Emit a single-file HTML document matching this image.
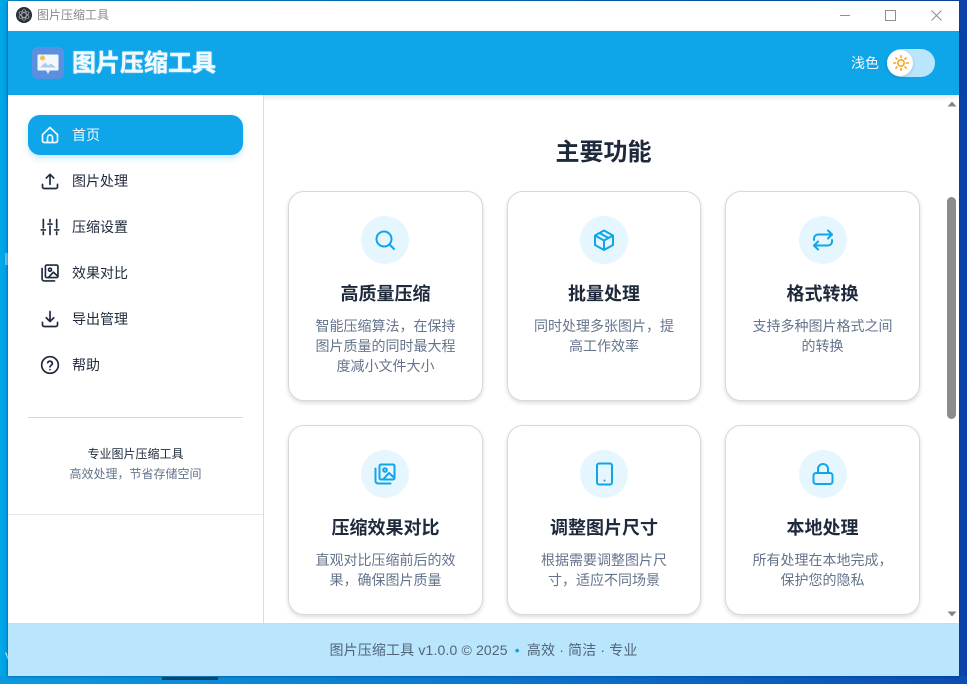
<!DOCTYPE html>
<html lang="zh">
<head>
<meta charset="utf-8">
<title>图片压缩工具</title>
<style>
*{box-sizing:border-box;margin:0;padding:0}
html,body{width:967px;height:684px;overflow:hidden}
body{position:relative;font-family:"Liberation Sans","Noto Sans CJK SC",sans-serif;background:linear-gradient(90deg,#00a8e8 0,#00a0e6 8px,#0a4ab0 959px,#0a3fa6 967px)}
.abs{position:absolute}
#bot{left:0;top:676px;width:967px;height:8px;background:linear-gradient(90deg,#0a9ae0,#0a78d0 50%,#0a4eb4)}
#win{left:8px;top:1px;width:951px;height:675px;background:#fff;box-shadow:0 0 3px rgba(0,30,80,.6)}
#tb{left:8px;top:1px;width:951px;height:30px;background:#fff}
#tbt{left:37px;top:8px;font-size:12px;line-height:15px;color:#8a8a8a}
#hd{left:8px;top:31px;width:951px;height:64px;background:#0ea5e9;box-shadow:0 2px 5px rgba(0,0,0,.12)}
#ttl{left:72px;top:47px;font-size:24px;line-height:33px;font-weight:700;color:#f0f9ff;white-space:nowrap;-webkit-text-stroke:.4px #f0f9ff;text-shadow:0 0 2px rgba(255,255,255,.35)}
#light{left:851px;top:54px;font-size:14px;line-height:18px;color:#f0f9ff}
#tog{left:887px;top:49px;width:48px;height:28px;border-radius:14px;background:#bae6fd}
#knob{left:887px;top:50px;width:26px;height:26px;border-radius:50%;background:#fff;box-shadow:0 1px 3px rgba(0,0,0,.18)}
#side{left:8px;top:95px;width:256px;height:528px;background:#fff;border-right:1px solid #d8dde3}
.nav{position:absolute;left:28px;width:215px;height:40px;border-radius:12px}
.nav svg{position:absolute;left:12px;top:10px}
.nav span{position:absolute;left:44px;top:10px;font-size:14px;line-height:20px;color:#1e293b}
.nav.on{background:#0ea5e9;box-shadow:0 3px 7px rgba(14,165,233,.25)}
.nav.on span{color:#f0f9ff}
#hr1{left:28px;top:417px;width:215px;height:1px;background:#d5dade}
#hr2{left:8px;top:514px;width:255px;height:1px;background:#e5e8ec}
#s1{left:8px;width:255px;top:446px;text-align:center;font-size:12px;line-height:17px;color:#1e293b}
#s2{left:8px;width:255px;top:466px;text-align:center;font-size:12px;line-height:17px;color:#64748b}
#h2{left:263px;width:681px;top:136px;text-align:center;font-size:24px;line-height:33px;font-weight:700;color:#1e293b}
.card{position:absolute;background:#fff;border:1px solid #d5d9de;border-radius:16px;box-shadow:0 2px 4px rgba(0,0,0,.14);text-align:center}
.ic{position:absolute;top:24px;left:50%;margin-left:-24px;width:48px;height:48px;border-radius:50%;background:#e6f6fe}
.c1 .ic{left:72px;margin-left:0}
.ic svg{position:absolute;left:12px;top:12px}
.card h3{position:absolute;left:0;right:0;top:90px;font-size:18px;line-height:25px;font-weight:700;color:#1e293b}
.card p{position:absolute;left:24px;right:24px;top:124px;font-size:14px;line-height:20px;color:#64748b}
#ft{left:8px;top:623px;width:951px;height:53px;background:#bae6fd;border-top:1px solid #cfd8de;text-align:center;font-size:14px;line-height:52px;color:#526478;letter-spacing:.15px}
#ft b{color:#0ea5e9;font-weight:400;margin:0 3px}
#thumb{left:947px;top:197px;width:9px;height:222px;border-radius:5px;background:#8c8c8c}
svg{display:block}
</style>
</head>
<body>
<div class="abs" id="bot"></div>
<div class="abs" style="left:162px;top:677px;width:56px;height:3px;background:#10303c;opacity:.75"></div>
<div class="abs" style="left:5px;top:650px;font-size:12px;line-height:14px;color:#e8f4ff">V</div>
<div class="abs" style="left:5px;top:253px;width:3px;height:12px;background:#d0ecfa;opacity:.5"></div>
<div class="abs" id="win"></div>
<div class="abs" id="tb"></div>
<svg class="abs" style="left:16px;top:7px" width="16" height="16" viewBox="0 0 16 16"><circle cx="8" cy="8" r="8" fill="#2b2e36"/><g fill="none" stroke="#9fa6b2" stroke-width=".8"><ellipse cx="8" cy="8" rx="5.5" ry="2.3" transform="rotate(30 8 8)"/><ellipse cx="8" cy="8" rx="5.5" ry="2.3" transform="rotate(90 8 8)"/><ellipse cx="8" cy="8" rx="5.5" ry="2.3" transform="rotate(150 8 8)"/></g></svg>
<div class="abs" id="tbt">图片压缩工具</div>
<svg class="abs" style="left:835px;top:5px" width="112" height="20" viewBox="0 0 112 20" fill="none" stroke="#8f8f8f" stroke-width="1"><path d="M5 10.5H15"/><rect x="50.5" y="5.500" width="10" height="10"/><path d="M96.500 5.500L106.500 15.500M106.500 5.500L96.500 15.500"/></svg>

<div class="abs" id="hd"></div>
<svg class="abs" style="left:32px;top:47px" width="32" height="32" viewBox="0 0 32 32"><rect width="32" height="32" rx="6" fill="#5b8fe0"/><rect x="5.500" y="7.500" width="21" height="16" rx="1" fill="#f4f8fc"/><path d="M8 20.500l5-5 3 3 3-2 5 4z" fill="#a9cdea"/><circle cx="10.500" cy="11" r="2.500" fill="#f7c04a"/><rect x="14.500" y="23.500" width="3" height="1.500" fill="#e6eef6"/><rect x="15" y="25" width="2" height="1.500" fill="#c6d8ea"/></svg>
<div class="abs" id="ttl">图片压缩工具</div>
<div class="abs" id="light">浅色</div>
<div class="abs" id="tog"></div>
<div class="abs" id="knob"></div>
<svg class="abs" style="left:893px;top:55px" width="16" height="16" viewBox="0 0 16 16" fill="none" stroke="#f59e0b" stroke-width="1.500" stroke-linecap="round"><circle cx="8" cy="8" r="3.200"/><path d="M8 .8v1.700M8 13.500v1.700M.8 8h1.700M13.500 8h1.700M2.900 2.900l1.200 1.200M11.900 11.900l1.200 1.200M2.900 13.100l1.200-1.200M11.900 4.100l1.200-1.200"/></svg>

<div class="abs" id="side"></div>
<div class="nav on" style="top:115px"><svg width="20" height="20" viewBox="0 0 24 24" fill="none" stroke="#f0f9ff" stroke-width="2" stroke-linecap="round" stroke-linejoin="round"><path d="M3 11.500L12 3l9 8.500V19a2 2 0 0 1-2 2H5a2 2 0 0 1-2-2z"/><path d="M9 21v-6a3 3 0 0 1 6 0v6"/></svg><span>首页</span></div>
<div class="nav" style="top:161px"><svg width="20" height="20" viewBox="0 0 24 24" fill="none" stroke="#1e293b" stroke-width="2" stroke-linecap="round" stroke-linejoin="round"><path d="M3 16v3a2 2 0 0 0 2 2h14a2 2 0 0 0 2-2v-3"/><path d="M12 16V4M7.500 8.500L12 4l4.500 4.500"/></svg><span>图片处理</span></div>
<div class="nav" style="top:207px"><svg width="20" height="20" viewBox="0 0 24 24" fill="none" stroke="#1e293b" stroke-width="2" stroke-linecap="round"><path d="M4 3v10M4 18v3M12 3v3M12 11v10M20 3v10M20 18v3M1.500 15.500h5M9.500 8.500h5M17.500 15.500h5"/></svg><span>压缩设置</span></div>
<div class="nav" style="top:253px"><svg width="20" height="20" viewBox="0 0 24 24" fill="none" stroke="#1e293b" stroke-width="2" stroke-linecap="round" stroke-linejoin="round"><rect x="6.500" y="2.500" width="15" height="15" rx="1.500"/><path d="M2.500 6.500V19a2.500 2.500 0 0 0 2.500 2.500h12.500"/><circle cx="12" cy="8" r="1.800"/><path d="M10 17.500l6-6.500 5.500 5"/></svg><span>效果对比</span></div>
<div class="nav" style="top:299px"><svg width="20" height="20" viewBox="0 0 24 24" fill="none" stroke="#1e293b" stroke-width="2" stroke-linecap="round" stroke-linejoin="round"><path d="M3 16v3a2 2 0 0 0 2 2h14a2 2 0 0 0 2-2v-3"/><path d="M12 3v12M7.500 10.500L12 15l4.500-4.500"/></svg><span>导出管理</span></div>
<div class="nav" style="top:345px"><svg width="20" height="20" viewBox="0 0 24 24" fill="none" stroke="#1e293b" stroke-width="2" stroke-linecap="round" stroke-linejoin="round"><circle cx="12" cy="12" r="10"/><path d="M9.200 9.300a2.900 2.900 0 0 1 5.600 1c0 1.900-2.800 2.400-2.800 4"/><path d="M12 17.500v.1"/></svg><span>帮助</span></div>
<div class="abs" id="hr1"></div>
<div class="abs" id="s1">专业图片压缩工具</div>
<div class="abs" id="s2">高效处理，节省存储空间</div>
<div class="abs" id="hr2"></div>

<div class="abs" id="h2">主要功能</div>

<div class="card c1" style="left:288px;top:191px;width:195px;height:210px"><div class="ic"><svg width="24" height="24" viewBox="0 0 24 24" fill="none" stroke="#0ea5e9" stroke-width="2" stroke-linecap="round"><circle cx="11" cy="11" r="7.500"/><path d="M16.500 16.500L21 21"/></svg></div><h3>高质量压缩</h3><p>智能压缩算法，在保持图片质量的同时最大程度减小文件大小</p></div>
<div class="card" style="left:507px;top:191px;width:194px;height:210px"><div class="ic"><svg width="24" height="24" viewBox="0 0 24 24" fill="none" stroke="#0ea5e9" stroke-width="2" stroke-linejoin="round"><path d="M12 2.500l9 5v9.500l-9 5-9-5V7.500z"/><path d="M3 7.500l9 5 9-5M12 12.500V22M7.500 5l9 5"/></svg></div><h3>批量处理</h3><p>同时处理多张图片，提高工作效率</p></div>
<div class="card" style="left:725px;top:191px;width:195px;height:210px"><div class="ic"><svg width="24" height="24" viewBox="0 0 24 24" fill="none" stroke="#0ea5e9" stroke-width="2" stroke-linecap="round" stroke-linejoin="round"><path d="M17 2.500L21 6.500l-4 4"/><path d="M21 6.500H7a4 4 0 0 0-4 4V12"/><path d="M7 21.500L3 17.500l4-4"/><path d="M3 17.500h14a4 4 0 0 0 4-4V12"/></svg></div><h3>格式转换</h3><p>支持多种图片格式之间的转换</p></div>
<div class="card c1" style="left:288px;top:425px;width:195px;height:190px"><div class="ic"><svg width="24" height="24" viewBox="0 0 24 24" fill="none" stroke="#0ea5e9" stroke-width="2" stroke-linecap="round" stroke-linejoin="round"><rect x="6.500" y="2.500" width="15" height="15" rx="1.500"/><path d="M2.500 6.500V19a2.500 2.500 0 0 0 2.500 2.500h12.500"/><circle cx="12" cy="8" r="1.800"/><path d="M10 17.500l6-6.500 5.500 5"/></svg></div><h3>压缩效果对比</h3><p>直观对比压缩前后的效果，确保图片质量</p></div>
<div class="card" style="left:507px;top:425px;width:194px;height:190px"><div class="ic"><svg width="24" height="24" viewBox="0 0 24 24" fill="none" stroke="#0ea5e9" stroke-width="2" stroke-linecap="round"><rect x="5" y="1.500" width="15" height="21" rx="2"/><path d="M12.500 18.500v.1"/></svg></div><h3>调整图片尺寸</h3><p>根据需要调整图片尺寸，适应不同场景</p></div>
<div class="card" style="left:725px;top:425px;width:195px;height:190px"><div class="ic"><svg width="24" height="24" viewBox="0 0 24 24" fill="none" stroke="#0ea5e9" stroke-width="2"><rect x="2.500" y="11" width="19" height="11" rx="2.500"/><path d="M7 11V7a5 5 0 0 1 10 0v4"/></svg></div><h3>本地处理</h3><p>所有处理在本地完成，保护您的隐私</p></div>

<svg class="abs" style="left:947px;top:101px" width="10" height="6" viewBox="0 0 10 6"><path d="M5 .5L9.500 5.500H.5z" fill="#858585"/></svg>
<div class="abs" id="thumb"></div>
<svg class="abs" style="left:947px;top:611px" width="10" height="6" viewBox="0 0 10 6"><path d="M.5.500H9.500L5 5.500z" fill="#858585"/></svg>

<div class="abs" id="ft">图片压缩工具 v1.0.0 © 2025 <b>•</b> 高效 · 简洁 · 专业</div>
</body>
</html>
